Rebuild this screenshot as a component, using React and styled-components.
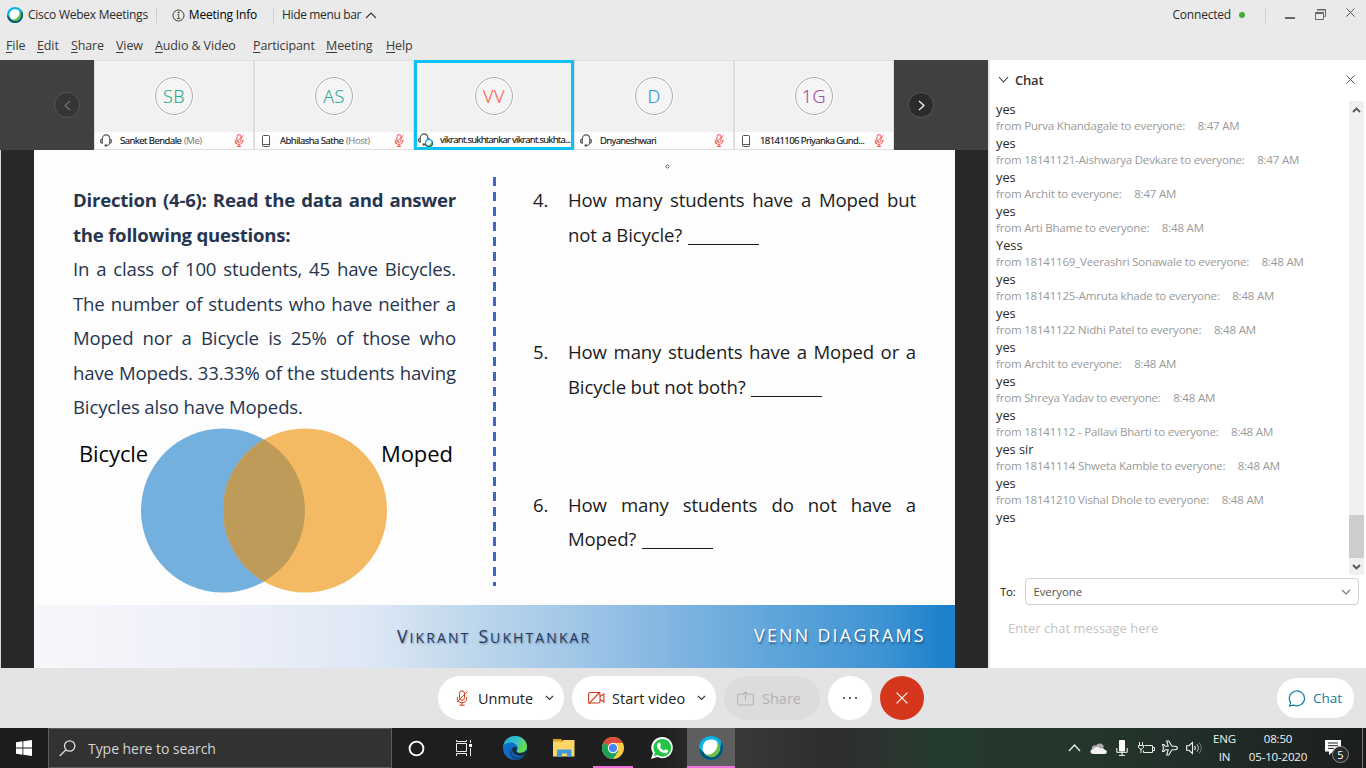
import React from "react";
import styled, { createGlobalStyle, css } from "styled-components";

const Global = createGlobalStyle`
  * { box-sizing: border-box; }
  body { margin: 0; background: #eaeaea; overflow: hidden; }
  svg { display: block; flex: none; }
`;

const ui = `"Open Sans", "Noto Sans", sans-serif`;

const Window = styled.div`
  width: 1366px;
  height: 768px;
  display: flex;
  flex-direction: column;
  font-family: ${ui};
  font-size: 12px;
  color: #222;
  white-space: nowrap;
  overflow: hidden;
`;

/* ---------- title and menu bars ---------- */

const TitleBar = styled.header`
  height: 30px;
  flex: none;
  background: #eaeaea;
  display: flex;
  align-items: center;
  padding-left: 7px;
  line-height: 30px;
`;
const TitleText = styled.span`
  letter-spacing: ${(p) => p.$track || -0.2}px;
  margin-left: ${(p) => p.$gap || 0}px;
  color: ${(p) => p.$color || "#2b2b2b"};
`;
const TitleRule = styled.i`
  width: 1px;
  height: 16px;
  background: #cfcfcf;
  margin: 0 ${(p) => p.$after}px 0 ${(p) => p.$before}px;
`;
const Spacer = styled.div`
  flex: 1;
`;
const StatusDot = styled.i`
  width: 6px;
  height: 6px;
  border-radius: 50%;
  background: #43ab3f;
  margin-left: 8px;
`;
const WindowButtons = styled.div`
  display: flex;
  width: 81px;
`;
const MenuBar = styled.nav`
  height: 30px;
  flex: none;
  background: #eaeaea;
  display: flex;
  padding-left: 6px;
  line-height: 31px;
  font-size: 12.5px;
  color: #3a3a3a;
`;
const MenuItem = styled.span`
  display: block;
  width: ${(p) => p.$w}px;
  letter-spacing: -0.12px;
  &::first-letter {
    text-decoration: underline;
    text-underline-offset: 2px;
  }
`;

/* ---------- filmstrip ---------- */

const Main = styled.div`
  height: 608px;
  flex: none;
  display: flex;
`;
const Stage = styled.section`
  width: 988px;
  display: flex;
  flex-direction: column;
`;
const Filmstrip = styled.div`
  height: 90px;
  flex: none;
  background: #404040;
  display: flex;
`;
const StripEnd = styled.div`
  width: 94px;
  display: flex;
  align-items: center;
  padding-left: ${(p) => p.$pad}px;
`;
const StripArrow = styled.div`
  width: 26px;
  height: 26px;
  border-radius: 50%;
  border: 1px solid #555;
  background: ${(p) => (p.$off ? "#353535" : "#2b2b2b")};
  display: grid;
  place-items: center;
`;
const Tile = styled.div`
  width: 160px;
  height: 90px;
  background: #f1f1f1;
  display: flex;
  flex-direction: column;
  border: 1px solid #dedede;
  ${(p) =>
    p.$active &&
    css`
      border: 3px solid #0cc1f4;
    `}
`;
const TileFace = styled.div`
  flex: 1;
  display: flex;
  justify-content: center;
  align-items: center;
  padding-bottom: ${(p) => (p.$active ? 3 : 1)}px;
`;
const Avatar = styled.div`
  width: 38px;
  height: 38px;
  border-radius: 50%;
  border: 1px solid #aaa;
  box-shadow: 0 0 0 1px #fff;
  background: #f5f5f5;
  color: ${(p) => p.$color};
  font-size: 18px;
  line-height: 37px;
  text-align: center;
  letter-spacing: 0.5px;
  font-weight: 300;
  font-kerning: none;
  -webkit-text-stroke: 0.2px ${(p) => p.$color};
`;
const TileLabel = styled.div`
  height: ${(p) => (p.$active ? 15 : 17)}px;
  background: #fdfdfd;
  display: flex;
  align-items: center;
  padding: ${(p) => (p.$active ? "0 0 0 1px" : "0 9px 0 5px")};
  font-size: 9.5px;
  color: #111;
`;
const TileName = styled.span`
  margin-left: ${(p) => p.$gap}px;
  letter-spacing: ${(p) => p.$track}px;
  line-height: 14px;
  flex: 1;
  padding-top: 1px;
  -webkit-text-stroke: 0.15px #111;
`;
const TileRole = styled.span`
  margin-left: 0.6px;
  letter-spacing: -0.4px;
  color: #777;
  -webkit-text-stroke: 0;
`;
const OnWebex = styled.span`
  margin: 6px 0 0 -5px;
`;
const IconSlot = styled.span`
  padding-left: ${(p) => p.$pad || 0}px;
  display: flex;
`;

/* ---------- shared slide ---------- */

const ShareArea = styled.div`
  flex: 1;
  background: #282828;
  border-left: 1px solid #d6d6d6;
  padding: 0 33px;
`;
const Slide = styled.div`
  position: relative;
  height: 518px;
  background: #fdfdfd;
  display: flex;
  flex-direction: column;
`;
const SlideBody = styled.div`
  height: 455px;
  display: flex;
  padding-top: 27px;
`;
const Passage = styled.div`
  width: 459px;
  padding: 6px 37px 0 39px;
  color: #27364f;
`;
const Line = styled.p`
  margin: 0;
  height: 34.55px;
  line-height: 34.55px;
  font-size: 18.6px;
  font-weight: ${(p) => (p.$bold ? 700 : 400)};
  letter-spacing: ${(p) => (p.$bold ? -0.24 : -0.15)}px;
  text-align: left;
  text-align-last: ${(p) => (p.$last ? "left" : "justify")};
`;
const Divider = styled.i`
  width: 3px;
  height: 409px;
  background: repeating-linear-gradient(#3c68c4 0 9px, transparent 9px 15px);
`;
const Venn = styled.div`
  display: flex;
  align-items: flex-start;
  margin-top: 3px;
  padding-left: 6px;
  color: #050505;
`;
const VennLabel = styled.span`
  font-size: 22px;
  line-height: 30px;
  margin-top: 10px;
  width: ${(p) => p.$w}px;
  letter-spacing: -0.1px;
`;
const VennArt = styled.svg`
  margin: 0 -6px 0 -8px;
`;
const Questions = styled.ol`
  margin: 0;
  padding: 6px 39px 0 37px;
  flex: 1;
  list-style: none;
  color: #1c1c1c;
`;
const Question = styled.li`
  height: 152.3px;
  display: flex;
`;
const QuestionNumber = styled.span`
  width: 35px;
  font-size: 18.5px;
  line-height: 34.55px;
`;
const QuestionText = styled.div`
  flex: 1;
`;
const Blank = styled.i`
  display: inline-block;
  width: 71px;
  height: 1px;
  margin-left: 1px;
  background: #1c1c1c;
  vertical-align: -3px;
`;
const SlideFooter = styled.div`
  height: 63px;
  display: flex;
  align-items: center;
  padding-left: 363px;
  background: linear-gradient(
    90deg,
    #f7f7fa 0%,
    #eef0f9 20%,
    #dfe8f5 36%,
    #bfd8ec 47%,
    #a3c8e8 58%,
    #7fb4e0 70%,
    #5aa3da 82%,
    #3f94d3 92%,
    #1c80cb 99%
  );
`;
const Presenter = styled.span`
  width: 357px;
  display: flex;
  gap: 8px;
  color: #26395a;
  text-shadow: 1px 1px 2px rgba(30, 50, 90, 0.45);
`;
const PresenterWord = styled.span`
  display: block;
  text-transform: uppercase;
  font-size: 14px;
  line-height: 24px;
  letter-spacing: 2.1px;
  &::first-letter {
    font-size: 17.5px;
  }
`;
const Topic = styled.span`
  font-size: 17.8px;
  letter-spacing: 2.3px;
  padding-bottom: 3px;
  color: #fff;
  text-shadow: 1px 2px 2px rgba(20, 50, 90, 0.6);
`;
const Pointer = styled.svg`
  position: absolute;
  left: 631px;
  top: 14px;
`;

/* ---------- chat panel ---------- */

const ChatPanel = styled.aside`
  width: 378px;
  background: #fff;
  border-left: 2px solid #e9e9e9;
  display: flex;
  flex-direction: column;
`;
const ChatHeader = styled.div`
  height: 40px;
  display: flex;
  align-items: center;
  padding: 0 11px 1px 8px;
  font-size: 13px;
  font-weight: 600;
  color: #333;
`;
const ChatTitle = styled.span`
  flex: 1;
  margin-left: 6px;
  letter-spacing: -0.2px;
`;
const ChatScroll = styled.div`
  display: flex;
  height: 475px;
  padding-right: 2px;
`;
const MessageList = styled.div`
  flex: 1;
  padding: 1px 0 0 6px;
`;
const Message = styled.div`
  height: 17px;
  line-height: 16px;
  font-size: 12.8px;
  color: #2a2a2a;
`;
const Sender = styled.div`
  height: 17px;
  line-height: 15px;
  font-size: 11.5px;
  letter-spacing: -0.19px;
  color: #9a9a9a;
`;
const SentAt = styled.span`
  margin-left: 12.5px;
`;
const ScrollTrack = styled.div`
  width: 15px;
  margin-top: 1px;
  background: #f0f0f0;
  display: flex;
  flex-direction: column;
  align-items: center;
`;
const ScrollThumb = styled.div`
  width: 15px;
  height: 43px;
  margin: 397px 0 5px;
  background: #cdcdcd;
`;
const Recipient = styled.div`
  display: flex;
  align-items: center;
  margin: 3px 7px 0 10px;
  font-size: 11.5px;
  letter-spacing: -0.3px;
  color: #222;
`;
const RecipientSelect = styled.div`
  flex: 1;
  height: 27px;
  margin-left: 10px;
  padding: 0 7px;
  border: 1px solid #d2d2d2;
  border-radius: 4px;
  display: flex;
  align-items: center;
  justify-content: space-between;
  letter-spacing: -0.1px;
  color: #555;
`;
const ChatInput = styled.div`
  margin: 13px 0 0 18px;
  line-height: 20px;
  font-size: 12.8px;
  letter-spacing: 0.12px;
  color: #c2c2c2;
`;

/* ---------- meeting controls ---------- */

const Controls = styled.div`
  height: 60px;
  flex: none;
  background: #e4e4e4;
  display: flex;
  align-items: center;
  padding: 0 12px 0 438px;
  gap: 8px;
`;
const Pill = styled.button`
  width: ${(p) => p.$w}px;
  height: 44px;
  border: 0;
  border-radius: 22px;
  padding: 0 0 0 ${(p) => p.$pad}px;
  display: flex;
  align-items: center;
  background: ${(p) => p.$bg || "#fff"};
  color: ${(p) => p.$color || "#222"};
  font-family: ${ui};
  font-size: 14.5px;
  letter-spacing: ${(p) => p.$track || 0}px;
`;
const PillText = styled.span`
  width: ${(p) => p.$w}px;
  text-align: left;
  white-space: nowrap;
`;
const RoundButton = styled.button`
  width: 44px;
  height: 44px;
  border: 0;
  border-radius: 50%;
  padding: 0;
  background: ${(p) => p.$bg};
  display: grid;
  place-items: center;
`;
const ChatButton = styled(Pill)`
  height: 40px;
  margin-left: auto;
  font-size: 13.5px;
`;

/* ---------- taskbar ---------- */

const Taskbar = styled.footer`
  height: 40px;
  flex: none;
  display: flex;
  background: linear-gradient(
    90deg,
    #1c1c1c 0,
    #1f1f1f 660px,
    #393939 740px,
    #2d2d2d 830px,
    #2e3230 870px,
    #243a2d 930px,
    #24372c 1090px,
    #202e28 1200px,
    #1e2523 1290px,
    #1c1e1e 1366px
  );
`;
const TaskButton = styled.div`
  width: 48px;
  height: 40px;
  flex: none;
  margin-left: ${(p) => p.$gap || 0}px;
  display: grid;
  place-items: center;
  background: ${(p) => (p.$active ? "#5e5e5e" : "none")};
  ${(p) =>
    p.$running &&
    css`
      background-image: linear-gradient(#ee72dc, #ee72dc);
      background-size: ${p.$running}px 2px;
      background-position: bottom center;
      background-repeat: no-repeat;
    `}
`;
const SearchBox = styled.div`
  width: 344px;
  flex: none;
  border: 1px solid #5c5c5c;
  background: #323232;
  display: flex;
  align-items: center;
  padding-left: 10px;
  font-size: 14px;
  color: #d4d4d4;
`;
const SearchHint = styled.span`
  margin-left: 12px;
  letter-spacing: -0.05px;
`;
const TrayIcon = styled.div`
  width: 24px;
  display: grid;
  place-items: center;
`;
const TrayText = styled.div`
  width: ${(p) => p.$w}px;
  padding-top: 2px;
  text-align: center;
  font-size: 11.5px;
  line-height: 18px;
  letter-spacing: -0.17px;
  color: #f2f2f2;
`;
const Notifications = styled.div`
  position: relative;
  width: 49px;
  padding: 12px 0 0 12px;
`;
const Badge = styled.span`
  position: absolute;
  left: 19px;
  top: 18px;
  width: 17px;
  height: 17px;
  border: 1px solid #8c8c8c;
  border-radius: 50%;
  background: #2a2a2a;
  color: #fff;
  font-size: 11px;
  line-height: 15px;
  text-align: center;
`;
const DesktopEdge = styled.i`
  width: 4px;
  border-left: 1px solid #777;
`;

/* ---------- icons ---------- */

const WebexLogo = ({ size }) => (
  <svg width={size} height={size} viewBox="0 0 24 24">
    <circle cx="12" cy="12" r="12" fill="#07b4e5" />
    <path d="M0 12a12 12 0 0 0 24 0c0-3-1-5-2-7C23 15 14 22 3 15 2 14 1 13 0 12z" fill="#00567a" />
    <path d="M19.5 7a8.8 8.8 0 1 1-15 9c8 4 13-1 15-9z" fill="#6cbf4b" />
    <path d="M12 3.5c4 0 7 1.300 6.600 5.500C18 15 12 20 7 18.500 1 15 3 3.500 12 3.500z" fill="#fff" />
  </svg>
);
const Info = () => (
  <svg width="13" height="13" viewBox="0 0 13 13" fill="none" stroke="#333">
    <circle cx="6.500" cy="6.500" r="5.500" />
    <path d="M5.300 5.500h1.400v4M5 9.500h3.300M6.200 3h1v1h-1z" strokeWidth="0.800" />
  </svg>
);
const Chevron = ({ dir = "down", w = 10, h = 5, color = "#333", sw = 1.1 }) => (
  <svg width={w + 2} height={h + 2} viewBox={`-1 -1 ${w + 2} ${h + 2}`} fill="none" stroke={color} strokeWidth={sw}>
    <path
      d={
        {
          down: `M0 0L${w / 2} ${h}L${w} 0`,
          up: `M0 ${h}L${w / 2} 0L${w} ${h}`,
          left: `M${w} 0L0 ${h / 2}L${w} ${h}`,
          right: `M0 0L${w} ${h / 2}L0 ${h}`,
        }[dir]
      }
    />
  </svg>
);
const Cross = ({ size = 9, color = "#555", sw = 1.1 }) => (
  <svg width={size} height={size} viewBox="0 0 10 10" stroke={color} strokeWidth={sw}>
    <path d="M.5 .5l9 9M9.500 .5l-9 9" />
  </svg>
);
const Minimize = () => (
  <svg width="30" height="14" viewBox="0 0 30 14">
    <path d="M0 9h10v2H0z" fill="#666" />
  </svg>
);
const Restore = () => (
  <svg width="31" height="14" viewBox="0 0 31 14" fill="none" stroke="#666">
    <path d="M.5 5.500h8v6h-8zM0 4.500h9M2.500 2.500V1.500h8v7h-1M2 2h9" />
  </svg>
);
const Headset = () => (
  <svg width="12" height="13" viewBox="0 0 12 13" fill="none" stroke="#555" strokeWidth="1.100">
    <path d="M2.200 5.500C2.200-.7 9.800-.7 9.800 5.500M2.300 5C0 5 0 9.200 2.300 9.200zM9.700 5c2.300 0 2.300 4.200 0 4.200zM9.500 9.500c-.3 1.700-1.500 2-3 2" />
    <circle cx="5.800" cy="11.500" r=".8" fill="#555" />
  </svg>
);
const Phone = () => (
  <svg width="8" height="12" viewBox="0 0 8 12" fill="none" stroke="#555">
    <rect x=".5" y=".5" width="7" height="11" rx="1" />
    <path d="M1 9.500h6" />
  </svg>
);
const MicOff = ({ w = 10, h = 13, color = "#f0413a", sw = 1.15 }) => (
  <svg width={w} height={h} viewBox="0 0 12 16" fill="none" stroke={color} strokeWidth={sw}>
    <rect x="3.500" y=".8" width="5" height="9.500" rx="2.500" />
    <path d="M1.300 7v1.500c0 2.700 2 4.200 4.700 4.200s4.700-1.500 4.700-4.200V7M6 12.700v2.500M3.300 15.200h5.400M11.500 1.500L.8 12" />
  </svg>
);
const VideoOff = () => (
  <svg width="17" height="14" viewBox="0 0 17 14" fill="none" stroke="#d4371c" strokeWidth="1.100">
    <rect x=".6" y="1.500" width="11.400" height="10.500" rx="1.500" />
    <path d="M.6 12.800L12 1M12 5.500l3.900-2.500v8L12 8.500" />
  </svg>
);
const ShareIcon = () => (
  <svg width="17" height="15" viewBox="0 0 17 15" fill="none" stroke="#b4b4b4" strokeWidth="1.100">
    <path d="M5 3H2.300C1.300 3 .7 3.600.7 4.500v8c0 1 .6 1.500 1.600 1.500h12.400c1 0 1.600-.5 1.600-1.500v-8c0-.9-.6-1.500-1.600-1.500H12M8.500 9.500V1M5.500 4l3-3 3 3" />
  </svg>
);
const Dots = () => (
  <svg width="16" height="4" viewBox="0 0 16 4" fill="#333">
    <circle cx="2" cy="2" r="1" />
    <circle cx="8" cy="2" r="1" />
    <circle cx="14" cy="2" r="1" />
  </svg>
);
const Bubble = () => (
  <svg width="18" height="17" viewBox="0 0 18 17" fill="none" stroke="#107c9e" strokeWidth="1.200">
    <path d="M1.500 15.900L2.700 12.600A7.600 7.400 0 1 1 5.800 15.100z" />
  </svg>
);
const WindowsLogo = () => (
  <svg width="16" height="16" viewBox="0 0 16 16" fill="#fff">
    <path d="M0 2.300L6.500 1.300v6.300H0zM7.300 1.200L16 0v7.600H7.300zM0 8.400h6.500v6.300L0 13.800zM7.300 8.400H16V16l-8.700-1.200z" />
  </svg>
);
const SearchIcon = () => (
  <svg width="17" height="17" viewBox="0 0 17 17" fill="none" stroke="#ddd" strokeWidth="1.300">
    <circle cx="10.700" cy="6" r="5.200" />
    <path d="M7 9.700L.7 16" />
  </svg>
);
const Cortana = () => (
  <svg width="17" height="17" viewBox="0 0 17 17">
    <circle cx="8.500" cy="8.500" r="6.900" fill="none" stroke="#fff" strokeWidth="1.900" />
  </svg>
);
const TaskView = () => (
  <svg width="18" height="16" viewBox="0 0 18 16" fill="none" stroke="#eee">
    <path d="M1.500 3.500h10v8h-10zM1.500 0v1.500h10V0M1.500 16v-2.500h10V16M15.500 0v3M15.500 8v8" />
    <path d="M14 4h3v3h-3z" fill="#fff" stroke="none" />
  </svg>
);
const Edge = () => (
  <svg width="24" height="24" viewBox="0 0 24 24">
    <defs>
      <linearGradient id="edgeTop" x1="0" x2="1" y1="0" y2=".4">
        <stop offset="0" stopColor="#2aa5dd" />
        <stop offset=".55" stopColor="#35c1c9" />
        <stop offset="1" stopColor="#66dc4e" />
      </linearGradient>
    </defs>
    <circle cx="12" cy="12" r="12" fill="#0f6fc8" />
    <path d="M.2 10C1.500 3.500 6.500 0 12 0c7 0 12 5 12 10.500 0 4-3 6.300-6.500 6.300-3 0-4-1-3.700-1.800.4-.8 1-1.500 1-3C14.800 9 11.500 6.500 8 6.500 4 6.500 1.200 8.500.2 10z" fill="url(#edgeTop)" />
    <path d="M8.500 12c-1.500 5 3 9.500 8 9 2-.2 4-1.200 5.500-2.700-2 3.700-6 5.700-10 5.700-5-2-7.500-8-3.500-12z" fill="#114a8b" />
    <path d="M14 11.500c0 2-1.500 3-.5 4.200 1.500 2 7 1.600 9.800-1.200l.3 1.500-2 3c-6 2.500-12.500-.5-12.500-5.500 0-1.500 2-3.500 4.900-2z" fill="#1c1f22" opacity=".85" />
  </svg>
);
const Explorer = () => (
  <svg width="22" height="18" viewBox="0 0 22 18">
    <path d="M0 0h8l2 2h-2v3H0z" fill="#e5a01d" />
    <path d="M0 2.500h9L10.500 1H21.500v16.500H0z" fill="#fcd667" />
    <path d="M4 18v-6.500q0-1 1-1h12.500q1 0 1 1V18h-4.500v-3.500h-5V18z" fill="#3f9adb" />
  </svg>
);
const Chrome = () => (
  <svg width="22" height="22" viewBox="0 0 22 22">
    <circle cx="11" cy="11" r="11" fill="#fccc44" />
    <path d="M11 11L1.500 5.500A11 11 0 0 0 11 22l5.500-8z" fill="#1ba25a" />
    <path d="M11 11L1.500 5.500A11 11 0 0 1 20.800 6H11z" fill="#dd4b3e" />
    <circle cx="11" cy="11" r="5.200" fill="#fff" />
    <circle cx="11" cy="11" r="4.100" fill="#4688f1" />
  </svg>
);
const WhatsApp = () => (
  <svg width="22" height="22" viewBox="0 0 22 22">
    <path d="M11.300 0a10.600 10.600 0 1 1-5 20L0 22l1.900-5.800A10.700 10.700 0 0 1 11.300 0z" fill="#fff" />
    <path d="M11.300 1.900a8.800 8.800 0 1 1-4.700 16.200L2.900 19.200 4 15.700A8.800 8.800 0 0 1 11.300 1.900z" fill="#25c447" />
    <path d="M7.500 5.800c.7-.5 1.300-.3 1.600.3l.8 2c.2.500-.6 1.300-.9 1.700 1 1.900 2.300 3 4.200 3.800.5-.4 1-1.500 1.500-1.300l2.100 1c.5.300.3 1-.1 1.700-.8 1.200-2.600 1.500-4.100 1-3.200-1-5.300-3-6.500-5.900-.6-1.500.2-3.500 1.400-4.300z" fill="#fff" />
  </svg>
);
const Cloud = () => (
  <svg width="17" height="11" viewBox="0 0 17 11">
    <path d="M2 6.500C.8 3.500 4 1.500 6 2.500 8-.8 13.500 0 14 4L8 7z" fill="#aaa" />
    <path d="M3.500 11C-.5 11-.5 6 3.500 6 5 3.500 8 3.500 10 5.500c2-1 4-.5 4.200 1C17.700 7 17.700 11 14.500 11z" fill="#f2f2f2" />
  </svg>
);
const Mic = () => (
  <svg width="12" height="16" viewBox="0 0 12 16">
    <rect x="3" width="6" height="11.500" rx="1" fill="#fff" />
    <path d="M.8 8v4.300h10.400V8M6 12v3.300M3 15.400h6" fill="none" stroke="#fff" />
  </svg>
);
const Battery = () => (
  <svg width="17" height="14" viewBox="0 0 17 14" fill="none" stroke="#eee">
    <path d="M6.500 4.500h8v7h-9v-2M15 6.500h1.500v3H15M1.500 1v3M4.500 1v3M.5 4.500h5v2L3 8.500.5 6.500zM3 8v4" />
  </svg>
);
const Plane = () => (
  <svg width="16" height="16" viewBox="0 0 16 16" fill="none" stroke="#eee" strokeWidth="1.100">
    <path d="M10 6.300h3.200c2.800 0 2.800 3.400 0 3.400H10L6.800 15H4.700L6.200 9.700H3.300L2 11.500H.6L1.500 8 .6 4.500H2l1.300 1.800h2.900L4.700 1h2.100z" />
  </svg>
);
const Speaker = () => (
  <svg width="17" height="14" viewBox="0 0 17 14" fill="none" stroke="#eee" strokeWidth="1.100">
    <path d="M.6 4.700h2.300L6.500 1.500v11L2.900 9.300H.6zM8.500 5c1 1.200 1 2.800 0 4" />
    <path d="M10.800 3.300c2 2.200 2 5.200 0 7.400" stroke="#aaa" />
    <path d="M13 1.500c3 3.300 3 7.700 0 11" stroke="#777" />
  </svg>
);
const Note = () => (
  <svg width="16" height="15" viewBox="0 0 16 15">
    <path d="M0 0h16v11.500h-8L4 15v-3.500H0z" fill="#fff" />
    <path d="M3 3h10M3 5.700h10M3 8.400h6" stroke="#222" />
  </svg>
);

/* ---------- data ---------- */

const people = [
  { initials: "SB", color: "#2aa98f", name: "Sanket Bendale", role: "(Me)", Icon: Headset, gap: 8, track: -0.52 },
  { initials: "AS", color: "#2aa98f", name: "Abhilasha Sathe", role: "(Host)", Icon: Phone, gap: 10, pad: 2, track: -0.5 },
  { initials: "VV", color: "#ff5c4d", name: "vikrant.sukhtankar vikrant.sukhta...", Icon: Headset, gap: 7, active: true, track: -0.7 },
  { initials: "D", color: "#2196d9", name: "Dnyaneshwari", Icon: Headset, gap: 8, track: -0.6 },
  { initials: "1G", color: "#a04ba3", name: "18141106 Priyanka Gund...", Icon: Phone, gap: 10, pad: 2, track: -0.57 },
];

const messages = [
  ["yes", "Purva Khandagale", "8:47 AM"],
  ["yes", "18141121-Aishwarya Devkare", "8:47 AM"],
  ["yes", "Archit", "8:47 AM"],
  ["yes", "Arti Bhame", "8:48 AM"],
  ["Yess", "18141169_Veerashri Sonawale", "8:48 AM"],
  ["yes", "18141125-Amruta khade", "8:48 AM"],
  ["yes", "18141122 Nidhi Patel", "8:48 AM"],
  ["yes", "Archit", "8:48 AM"],
  ["yes", "Shreya Yadav", "8:48 AM"],
  ["yes", "18141112 - Pallavi Bharti", "8:48 AM"],
  ["yes sir", "18141114 Shweta Kamble", "8:48 AM"],
  ["yes", "18141210 Vishal Dhole", "8:48 AM"],
  ["yes"],
];

const menu = [
  ["File", 31],
  ["Edit", 34],
  ["Share", 45],
  ["View", 39],
  ["Audio & Video", 98],
  ["Participant", 73],
  ["Meeting", 60],
  ["Help", 30],
];

const passage = [
  "In a class of 100 students, 45 have Bicycles.",
  "The number of students who have neither a",
  "Moped nor a Bicycle is 25% of those who",
  "have Mopeds. 33.33% of the students having",
];

const questions = [
  ["4.", "How many students have a Moped but", "not a Bicycle?"],
  ["5.", "How many students have a Moped or a", "Bicycle but not both?"],
  ["6.", "How many students do not have a", "Moped?"],
];

export default function App() {
  return (
    <Window>
      <Global />
      <TitleBar>
        <WebexLogo size={16} />
        <TitleText $gap={5} $track={-0.25}>Cisco Webex Meetings</TitleText>
        <TitleRule $before={8} $after={15} />
        <Info />
        <TitleText $gap={4} $color="#000">Meeting Info</TitleText>
        <TitleRule $before={16} $after={8} />
        <TitleText $track={-0.35}>Hide menu bar</TitleText>
        <IconSlot $pad={4}>
          <Chevron dir="up" />
        </IconSlot>
        <Spacer />
        <TitleText>Connected</TitleText>
        <StatusDot />
        <TitleRule $before={20} $after={19} />
        <WindowButtons>
          <Minimize />
          <Restore />
          <Cross />
        </WindowButtons>
      </TitleBar>
      <MenuBar>
        {menu.map(([t, w]) => (
          <MenuItem key={t} $w={w}>{t}</MenuItem>
        ))}
      </MenuBar>

      <Main>
        <Stage>
          <Filmstrip>
            <StripEnd $pad={54}>
              <StripArrow $off>
                <Chevron dir="left" w={5} h={9} color="#777" />
              </StripArrow>
            </StripEnd>
            {people.map((p) => (
              <Tile key={p.initials} $active={p.active}>
                <TileFace $active={p.active}>
                  <Avatar $color={p.color}>{p.initials}</Avatar>
                </TileFace>
                <TileLabel $active={p.active}>
                  <IconSlot $pad={p.pad}>
                    <p.Icon />
                  </IconSlot>
                  {p.active && (
                    <OnWebex>
                      <WebexLogo size={8} />
                    </OnWebex>
                  )}
                  <TileName $gap={p.gap} $track={p.track}>
                    {p.name} {p.role && <TileRole>{p.role}</TileRole>}
                  </TileName>
                  {!p.active && <MicOff />}
                </TileLabel>
              </Tile>
            ))}
            <StripEnd $pad={14}>
              <StripArrow>
                <Chevron dir="right" w={5} h={9} color="#eee" sw={1.4} />
              </StripArrow>
            </StripEnd>
          </Filmstrip>

          <ShareArea>
            <Slide>
              <SlideBody>
                <Passage>
                  <Line $bold>Direction (4-6): Read the data and answer</Line>
                  <Line $bold $last>the following questions:</Line>
                  {passage.map((t) => (
                    <Line key={t}>{t}</Line>
                  ))}
                  <Line $last>Bicycles also have Mopeds.</Line>
                  <Venn>
                    <VennLabel $w={70}>Bicycle</VennLabel>
                    <VennArt width="246" height="166" viewBox="0 0 246 166">
                      <circle cx="82" cy="82.500" r="82" fill="#74b0dd" />
                      <circle cx="164" cy="82.500" r="82" fill="#f4b963" />
                      <path d="M123 11.500a82 82 0 0 1 0 142a82 82 0 0 1 0-142z" fill="#be9b59" />
                    </VennArt>
                    <VennLabel $w={74}>Moped</VennLabel>
                  </Venn>
                </Passage>
                <Divider />
                <Questions>
                  {questions.map(([n, a, b]) => (
                    <Question key={n}>
                      <QuestionNumber>{n}</QuestionNumber>
                      <QuestionText>
                        <Line>{a}</Line>
                        <Line $last>{b} <Blank /></Line>
                      </QuestionText>
                    </Question>
                  ))}
                </Questions>
              </SlideBody>
              <SlideFooter>
                <Presenter>
                  <PresenterWord>Vikrant</PresenterWord>
                  <PresenterWord>Sukhtankar</PresenterWord>
                </Presenter>
                <Topic>VENN DIAGRAMS</Topic>
              </SlideFooter>
              <Pointer width="5" height="5" viewBox="0 0 5 5">
                <path d="M2.500 .7L4.300 2.500 2.500 4.300.7 2.500z" fill="#fff" stroke="#555" />
              </Pointer>
            </Slide>
          </ShareArea>
        </Stage>

        <ChatPanel>
          <ChatHeader>
            <Chevron w={9} h={5} />
            <ChatTitle>Chat</ChatTitle>
            <Cross />
          </ChatHeader>
          <ChatScroll>
            <MessageList>
              {messages.map(([text, from, time], i) => (
                <React.Fragment key={i}>
                  <Message>{text}</Message>
                  {from && (
                    <Sender>
                      from {from} to everyone:<SentAt>{time}</SentAt>
                    </Sender>
                  )}
                </React.Fragment>
              ))}
            </MessageList>
            <ScrollTrack>
              <svg width="15" height="17" viewBox="0 0 15 17" fill="none" stroke="#555" strokeWidth="1.800">
                <path d="M4 11L7.500 7.500 11 11" />
              </svg>
              <ScrollThumb />
              <svg width="15" height="12" viewBox="0 0 15 12" fill="none" stroke="#555" strokeWidth="1.800">
                <path d="M4 2L7.500 5.500 11 2" />
              </svg>
            </ScrollTrack>
          </ChatScroll>
          <Recipient>
            To:
            <RecipientSelect>
              Everyone
              <Chevron w={8} h={4} color="#777" />
            </RecipientSelect>
          </Recipient>
          <ChatInput>Enter chat message here</ChatInput>
        </ChatPanel>
      </Main>

      <Controls>
        <Pill $w={126} $pad={18}>
          <MicOff w={12} h={16} color="#d4371c" sw={1} />
          <IconSlot $pad={10}>
            <PillText $w={67}>Unmute</PillText>
          </IconSlot>
          <Chevron w={7} h={3.5} />
        </Pill>
        <Pill $w={144} $pad={16} $track={0.05}>
          <VideoOff />
          <IconSlot $pad={7}>
            <PillText $w={85}>Start video</PillText>
          </IconSlot>
          <Chevron w={7} h={3.5} />
        </Pill>
        <Pill $w={96} $pad={13} $bg="#dcdcdc" $color="#b2b2b2">
          <ShareIcon />
          <IconSlot $pad={8}>
            <PillText>Share</PillText>
          </IconSlot>
        </Pill>
        <RoundButton $bg="#fff">
          <Dots />
        </RoundButton>
        <RoundButton $bg="#d5371c">
          <Cross size={12} color="#fff" sw={0.9} />
        </RoundButton>
        <ChatButton $w={77} $pad={11} $color="#107c9e">
          <Bubble />
          <IconSlot $pad={7}>
            <PillText>Chat</PillText>
          </IconSlot>
        </ChatButton>
      </Controls>

      <Taskbar>
        <TaskButton><WindowsLogo /></TaskButton>
        <SearchBox>
          <SearchIcon />
          <SearchHint>Type here to search</SearchHint>
        </SearchBox>
        <TaskButton><Cortana /></TaskButton>
        <TaskButton><TaskView /></TaskButton>
        <TaskButton $gap={3}><Edge /></TaskButton>
        <TaskButton $gap={1}><Explorer /></TaskButton>
        <TaskButton $gap={1} $running={40}><Chrome /></TaskButton>
        <TaskButton $gap={1}><WhatsApp /></TaskButton>
        <TaskButton $gap={1} $active $running={48}><WebexLogo size={24} /></TaskButton>
        <Spacer />
        <TrayIcon><Chevron dir="up" w={11} h={6} color="#eee" sw={1.3} /></TrayIcon>
        <TrayIcon><Cloud /></TrayIcon>
        <TrayIcon><Mic /></TrayIcon>
        <TrayIcon><Battery /></TrayIcon>
        <TrayIcon><Plane /></TrayIcon>
        <TrayIcon><Speaker /></TrayIcon>
        <TrayText $w={37}>ENG<br />IN</TrayText>
        <TrayText $w={70}>08:50<br />05-10-2020</TrayText>
        <Notifications>
          <Note />
          <Badge>5</Badge>
        </Notifications>
        <DesktopEdge />
      </Taskbar>
    </Window>
  );
}
